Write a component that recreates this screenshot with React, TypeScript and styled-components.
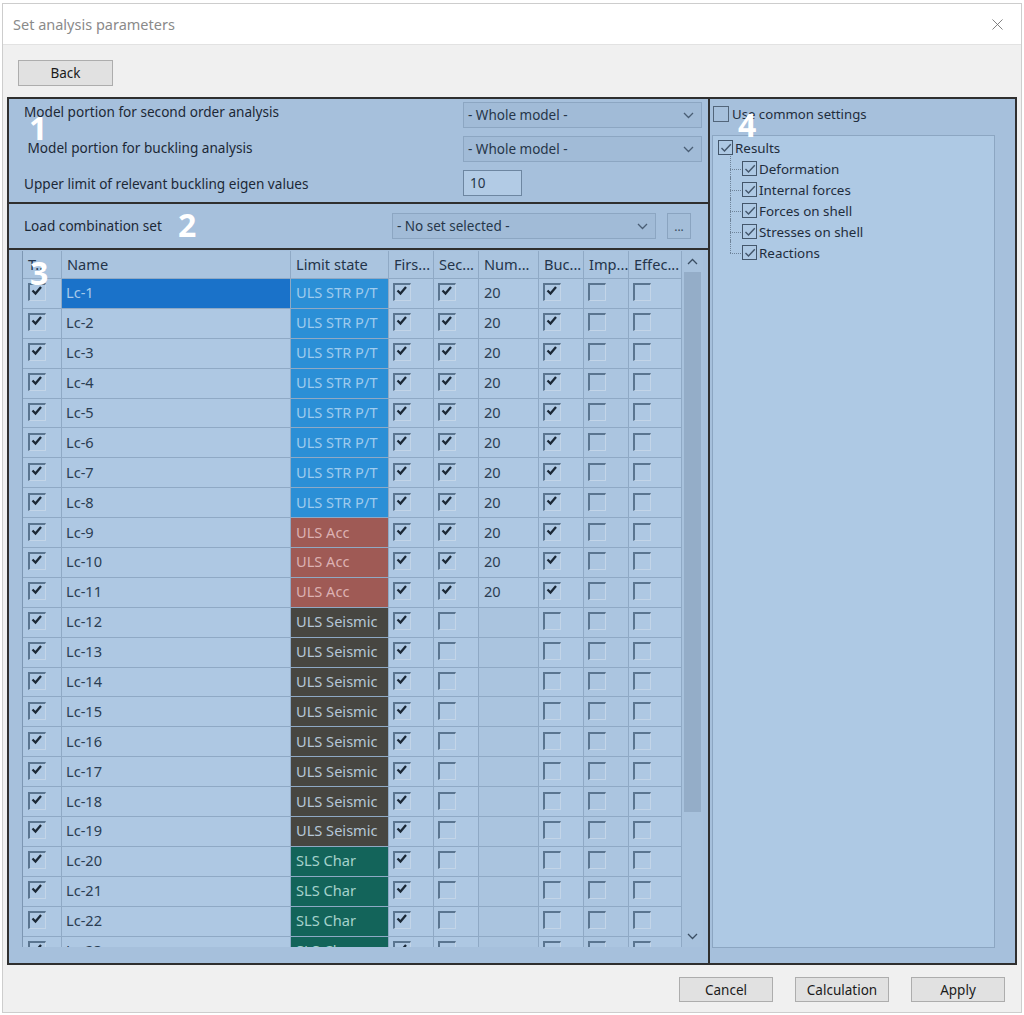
import React from "react";
import styled, { createGlobalStyle } from "styled-components";
import { X } from "lucide-react";

const GlobalStyle = createGlobalStyle`
  html, body {
    margin: 0;
    padding: 0;
    background: #ffffff;
  }
  body {
    font-family: "Noto Sans", "Liberation Sans", sans-serif;
  }
`;

const Window = styled.div`
  margin: 3px 0 0 2px;
  width: 1020px;
  height: 1010px;
  box-sizing: border-box;
  border: 1px solid #cdcdcd;
  display: flex;
  flex-direction: column;
  background: #f0f0f0;
`;

const TitleBar = styled.div`
  flex: none;
  height: 41px;
  box-sizing: border-box;
  background: #ffffff;
  border-bottom: 1px solid #e2e2e2;
  display: flex;
  align-items: center;
  justify-content: space-between;
  padding: 0 14px 0 10px;
  color: #8a8a8a;
  font-size: 14.5px;
`;

const Body = styled.div`
  flex: 1;
  display: flex;
  flex-direction: column;
  padding: 15px 4px 0 4px;
  min-height: 0;
`;

const Button = styled.button`
  width: ${(p) => p.$w || 94}px;
  height: ${(p) => p.$h || 25}px;
  box-sizing: border-box;
  background: #e1e1e1;
  border: 1px solid #adadad;
  font-family: inherit;
  font-size: 13.5px;
  color: #1b1b1b;
  padding: 0;
`;

const BackRow = styled.div`
  padding-left: 11px;
  margin-bottom: 11px;
`;

const MainPanel = styled.div`
  position: relative;
  height: 868px;
  box-sizing: border-box;
  border: 2px solid #2f2f2f;
  background: #a6c0dc;
  display: flex;
`;

const Marker = styled.span`
  position: absolute;
  left: ${(p) => p.$x}px;
  top: ${(p) => p.$y}px;
  font-size: 32px;
  line-height: 32px;
  font-weight: 700;
  color: #ffffff;
  pointer-events: none;
`;

const LeftPane = styled.div`
  width: 701px;
  flex: none;
  box-sizing: border-box;
  border-right: 2px solid #2f2f2f;
  display: flex;
  flex-direction: column;
`;

const SettingsSection = styled.div`
  height: 105px;
  flex: none;
  box-sizing: border-box;
  border-bottom: 2px solid #2f2f2f;
  padding: 3px 6px 0 15px;
  display: grid;
  grid-template-columns: 1fr 239px;
  grid-auto-rows: 26px;
  row-gap: 8px;
  align-items: center;
`;

const Label = styled.span`
  font-size: 13.6px;
  color: #1c2836;
  margin-top: ${(p) => p.$dy || 0}px;
  white-space: nowrap;
`;

const Select = styled.div`
  width: ${(p) => (p.$w ? `${p.$w}px` : "100%")};
  height: 26px;
  box-sizing: border-box;
  background: #a1bbd7;
  border: 1px solid #8ca6c2;
  display: flex;
  align-items: center;
  justify-content: space-between;
  padding: 0 7px 0 4px;
  font-size: 13.5px;
  color: #263649;
`;

const NumberInput = styled.div`
  width: 59px;
  height: 26px;
  box-sizing: border-box;
  background: #b2cbe5;
  border: 1px solid #6d86a1;
  display: flex;
  align-items: center;
  padding-left: 6px;
  font-size: 13.5px;
  color: #263649;
`;

const ComboSection = styled.div`
  height: 46px;
  flex: none;
  box-sizing: border-box;
  border-bottom: 2px solid #2f2f2f;
  padding: 9px 17px 0 15px;
  display: flex;
  align-items: flex-start;
`;

const ComboLabel = styled(Label)`
  flex: 1;
  line-height: 26px;
`;

const DotsButton = styled.div`
  width: 24px;
  height: 26px;
  box-sizing: border-box;
  margin-left: 11px;
  background: #a4bed9;
  border: 1px solid #8aa4c0;
  display: flex;
  align-items: center;
  justify-content: center;
  font-size: 12px;
  color: #3a4b5e;
`;

const TableSection = styled.div`
  flex: 1;
  padding: 1px 5px 0 13px;
  min-height: 0;
`;

const TableFrame = styled.div`
  height: 696px;
  display: flex;
  border-left: 1px solid #7d97b3;
  overflow: hidden;
`;

const GridViewport = styled.div`
  flex: 1;
  overflow: hidden;
`;

const Grid = styled.div`
  display: grid;
  grid-template-columns: 38px 228px 97px 44px 44px 59px 44px 44px 52px;
  grid-template-rows: 27px;
  grid-auto-rows: 28.9px;
  gap: 1px;
  background: #8fa9c5;
`;

const HeadCell = styled.div`
  background: #aac4df;
  display: flex;
  align-items: center;
  padding: 0 0 1px 5px;
  font-size: 14.6px;
  color: #24344a;
  white-space: nowrap;
  overflow: hidden;
`;

const Cell = styled.div`
  background: ${(p) => p.$bg || "#aec8e3"};
  color: ${(p) => p.$fg || "#2b3d52"};
  display: flex;
  align-items: center;
  padding: 0 0 2px ${(p) => p.$pad ?? 4}px;
  font-size: 14.6px;
  white-space: nowrap;
  overflow: hidden;
`;

const Box = styled.span`
  width: 18px;
  height: 18px;
  box-sizing: border-box;
  border-top: 2px solid #5a7590;
  border-left: 2px solid #5a7590;
  border-right: 1px solid #c3d5e8;
  border-bottom: 1px solid #c3d5e8;
  display: flex;
  align-items: flex-start;
  justify-content: flex-start;
`;

const Scrollbar = styled.div`
  width: 21px;
  flex: none;
  background: #a8c2dd;
  display: flex;
  flex-direction: column;
`;

const ScrollArrow = styled.div`
  height: ${(p) => p.$h}px;
  flex: none;
  display: flex;
  align-items: center;
  justify-content: center;
`;

const Thumb = styled.div`
  height: 540px;
  flex: none;
  margin: 0 2px;
  background: #94adc8;
`;

const Track = styled.div`
  flex: 1;
`;

const RightPane = styled.div`
  flex: 1;
  display: flex;
  flex-direction: column;
  padding: 7px 20px 15px 2px;
`;

const CommonRow = styled.div`
  display: flex;
  align-items: center;
  gap: 3px;
  font-size: 13.2px;
  color: #1f2d3d;
  margin: 0 0 13px 1px;
  height: 16px;
`;

const PlainBox = styled.span`
  width: 16px;
  height: 16px;
  box-sizing: border-box;
  border: 1.5px solid #52657a;
`;

const TreeBox = styled.div`
  flex: 1;
  background: #aec9e4;
  border: 1px solid #8ca6c2;
  padding: 1px 5px;
`;

const TreeRow = styled.div`
  position: relative;
  height: 21px;
  display: flex;
  align-items: center;
  gap: 2px;
  font-size: 13.4px;
  color: #1f2d3d;
`;

const ChildList = styled.div`
  margin-left: 12px;
`;

const ChildRow = styled(TreeRow)`
  padding-left: 12px;

  &::before {
    content: "";
    position: absolute;
    left: 0;
    top: 50%;
    width: 11px;
    border-top: 1px dotted #6e8399;
  }

  &::after {
    content: "";
    position: absolute;
    left: 0;
    top: -2px;
    height: ${(p) => (p.$last ? "13px" : "23px")};
    border-left: 1px dotted #6e8399;
  }
`;

const TreeCheck = styled.span`
  width: 15px;
  height: 15px;
  flex: none;
  box-sizing: border-box;
  border: 1.5px solid #43566b;
  display: flex;
  align-items: center;
  justify-content: center;
`;

const Footer = styled.div`
  flex: 1;
  display: flex;
  justify-content: flex-end;
  align-items: flex-start;
  gap: 22px;
  padding: 12px 12px 0 0;
`;

const Chevron = ({ up = false, color = "#4a5e75" }) => (
  <svg width="11" height="7" viewBox="0 0 11 7">
    <path
      d={up ? "M1 6 L5.5 1.5 L10 6" : "M1 1 L5.5 5.5 L10 1"}
      stroke={color}
      strokeWidth="1.3"
      fill="none"
    />
  </svg>
);

const GridTick = () => (
  <svg width="14" height="12" viewBox="0 0 14 12">
    <path d="M2.5 5.5 L5.5 8.5 L11 2" stroke="#1b2836" strokeWidth="2.3" fill="none" />
  </svg>
);

const GridCheck = ({ on }) => <Box>{on && <GridTick />}</Box>;

const TreeTick = () => (
  <svg width="12" height="12" viewBox="0 0 12 12">
    <path d="M1.5 6 L4.5 9 L10.8 2.2" stroke="#43566b" strokeWidth="1.4" fill="none" />
  </svg>
);

type LimitState = "str" | "acc" | "seis" | "sls";

const limitStyles: Record<LimitState, { label: string; bg: string; fg: string }> = {
  str: { label: "ULS STR P/T", bg: "#2b8fd6", fg: "#9fcbed" },
  acc: { label: "ULS Acc", bg: "#9f5a55", fg: "#dcb1b2" },
  seis: { label: "ULS Seismic", bg: "#474641", fg: "#b6c6d7" },
  sls: { label: "SLS Char", bg: "#13645a", fg: "#a6d2cc" },
};

const rows = Array.from({ length: 24 }, (_, i) => {
  const n = i + 1;
  const kind: LimitState = n <= 8 ? "str" : n <= 11 ? "acc" : n <= 19 ? "seis" : "sls";
  const full = n <= 11;
  return { name: `Lc-${n}`, kind, full };
});

const headers = ["T...", "Name", "Limit state", "Firs...", "Sec...", "Num...", "Buc...", "Imp...", "Effec..."];

const treeItems = ["Deformation", "Internal forces", "Forces on shell", "Stresses on shell", "Reactions"];

export default function App() {
  return (
    <>
      <GlobalStyle />
      <Window>
        <TitleBar>
          <span>Set analysis parameters</span>
          <X size={19} strokeWidth={1.1} color="#6f6f6f" />
        </TitleBar>
        <Body>
          <BackRow>
            <Button $w={95} $h={26}>Back</Button>
          </BackRow>
          <MainPanel>
            <LeftPane>
              <SettingsSection>
                <Label $dy={-8}>Model portion for second order analysis</Label>
                <Select>
                  <span>- Whole model -</span>
                  <Chevron />
                </Select>
                <Label $dy={-3}>&nbsp;Model portion for buckling analysis</Label>
                <Select>
                  <span>- Whole model -</span>
                  <Chevron />
                </Select>
                <Label>Upper limit of relevant buckling eigen values</Label>
                <NumberInput>10</NumberInput>
              </SettingsSection>
              <ComboSection>
                <ComboLabel>Load combination set</ComboLabel>
                <Select $w={264}>
                  <span>- No set selected -</span>
                  <Chevron />
                </Select>
                <DotsButton>...</DotsButton>
              </ComboSection>
              <TableSection>
                <TableFrame>
                  <GridViewport>
                    <Grid>
                      {headers.map((h) => (
                        <HeadCell key={h}>{h}</HeadCell>
                      ))}
                      {rows.map((r, i) => {
                        const ls = limitStyles[r.kind];
                        return (
                          <React.Fragment key={r.name}>
                            <Cell $pad={5}>
                              <GridCheck on />
                            </Cell>
                            {i === 0 ? (
                              <Cell $bg="#1a72c9" $fg="#a6c9ea">{r.name}</Cell>
                            ) : (
                              <Cell>{r.name}</Cell>
                            )}
                            <Cell $bg={ls.bg} $fg={ls.fg} $pad={5}>
                              {ls.label}
                            </Cell>
                            <Cell>
                              <GridCheck on />
                            </Cell>
                            <Cell>
                              <GridCheck on={r.full} />
                            </Cell>
                            <Cell $bg={r.full ? "#aec8e3" : "#aac4df"} $pad={5}>
                              {r.full ? "20" : ""}
                            </Cell>
                            <Cell>
                              <GridCheck on={r.full} />
                            </Cell>
                            <Cell $bg="#abc5e0">
                              <GridCheck on={false} />
                            </Cell>
                            <Cell>
                              <GridCheck on={false} />
                            </Cell>
                          </React.Fragment>
                        );
                      })}
                    </Grid>
                  </GridViewport>
                  <Scrollbar>
                    <ScrollArrow $h={21}>
                      <Chevron up color="#3b4e63" />
                    </ScrollArrow>
                    <Thumb />
                    <Track />
                    <ScrollArrow $h={22}>
                      <Chevron color="#3b4e63" />
                    </ScrollArrow>
                  </Scrollbar>
                </TableFrame>
              </TableSection>
            </LeftPane>
            <RightPane>
              <CommonRow>
                <PlainBox />
                <span>Use common settings</span>
              </CommonRow>
              <TreeBox>
                <TreeRow>
                  <TreeCheck>
                    <TreeTick />
                  </TreeCheck>
                  <span>Results</span>
                </TreeRow>
                <ChildList>
                  {treeItems.map((t, i) => (
                    <ChildRow key={t} $last={i === treeItems.length - 1}>
                      <TreeCheck>
                        <TreeTick />
                      </TreeCheck>
                      <span>{t}</span>
                    </ChildRow>
                  ))}
                </ChildList>
              </TreeBox>
            </RightPane>
            <Marker $x={20} $y={13}>1</Marker>
            <Marker $x={169} $y={110}>2</Marker>
            <Marker $x={21} $y={158}>3</Marker>
            <Marker $x={729} $y={10}>4</Marker>
          </MainPanel>
          <Footer>
            <Button>Cancel</Button>
            <Button>Calculation</Button>
            <Button>Apply</Button>
          </Footer>
        </Body>
      </Window>
    </>
  );
}
